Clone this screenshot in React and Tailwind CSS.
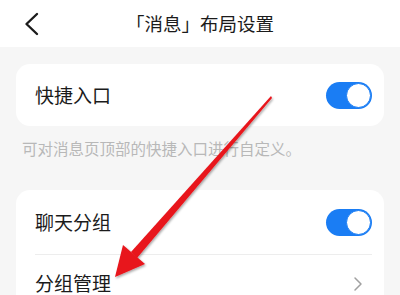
const font = { fontFamily: '"Noto Sans CJK SC", "Noto Sans", sans-serif' };

function Toggle() {
  return (
    <div className="flex h-[27px] w-[46px] items-center justify-end rounded-full bg-[#1a7df4] p-[1px]">
      <div className="h-[25px] w-[25px] rounded-full border border-[#1a7df4] bg-white" />
    </div>
  );
}

function Row({ label, children, divider, height }) {
  return (
    <div className="pl-[19px] pr-[12px]">
      <div className={`flex items-center justify-between ${height} ${divider ? "border-b border-[#ededed]" : ""}`}>
        <span className="text-[19px] text-[#1b1b1b]">{label}</span>
        {children}
      </div>
    </div>
  );
}

function Arrow() {
  return (
    <svg className="pointer-events-none absolute left-0 top-0" width="400" height="295" viewBox="0 0 400 295">
      <defs>
        <filter id="sh" x="-20%" y="-20%" width="140%" height="140%">
          <feDropShadow dx="1" dy="1.5" stdDeviation="1.2" floodColor="#000" floodOpacity="0.35" />
        </filter>
      </defs>
      <g filter="url(#sh)">
        <polygon points="271,96 272,98 137,258 131,252" fill="#e8141b" />
        <polygon points="115,277 123,245 145,264" fill="#e8141b" />
      </g>
    </svg>
  );
}

export default function App() {
  return (
    <div className="relative h-[295px] w-[400px] overflow-hidden bg-[#f6f6f6]" style={font}>
      <div className="flex h-[47px] items-center bg-white">
        <div className="flex w-[60px] justify-start pl-[24px]">
          <svg width="16" height="24" viewBox="0 0 16 24">
            <polyline points="13,2 2.5,12 13,22" fill="none" stroke="#1b1b1b" strokeWidth="2.4" strokeLinecap="round" strokeLinejoin="round" />
          </svg>
        </div>
        <div className="flex-1 text-center text-[18.5px] text-[#1b1b1b]">「消息」布局设置</div>
        <div className="w-[60px]" />
      </div>

      <div className="px-4 pt-[17px]">
        <div className="rounded-[14px] bg-white">
          <Row label="快捷入口" height="h-[62px]">
            <Toggle />
          </Row>
        </div>
        <p className="px-[6px] pt-[11px] text-[15.5px] leading-[22px] text-[#b8b8b8]">可对消息页顶部的快捷入口进行自定义。</p>

        <div className="mt-[31px] rounded-[14px] bg-white">
          <Row label="聊天分组" divider height="h-[65px]">
            <Toggle />
          </Row>
          <Row label="分组管理" height="h-[57px]">
            <svg className="mr-[9px]" width="10" height="16" viewBox="0 0 10 16">
              <polyline points="2,2 8,8 2,14" fill="none" stroke="#a0a0a0" strokeWidth="1.5" strokeLinecap="round" strokeLinejoin="round" />
            </svg>
          </Row>
        </div>
      </div>

      <Arrow />
    </div>
  );
}
